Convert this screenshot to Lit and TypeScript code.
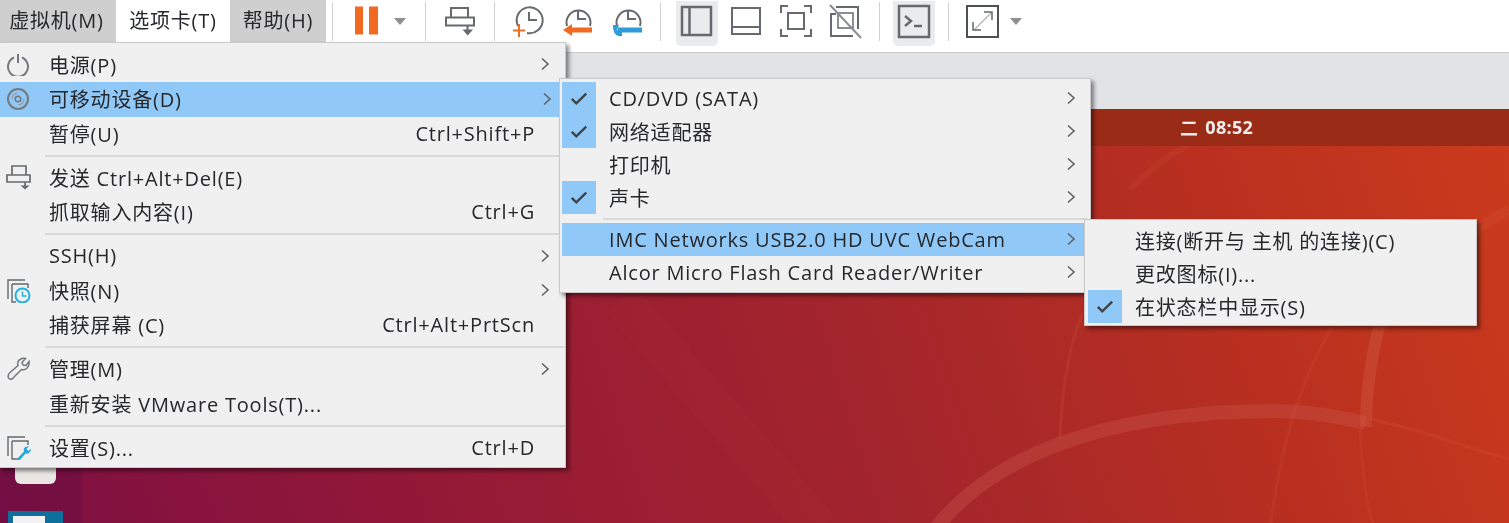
import { LitElement, html, svg, css } from "lit";
import { customElement } from "lit/decorators.js";

const G = "#666a6e";
const ico = (body: unknown, cls = "i36", vb = "0 0 36 36") =>
  html`<svg class=${cls} viewBox=${vb} fill="none" stroke=${G} stroke-width="2">${body}</svg>`;

const tb = {
  pause: html`<svg class="i36" viewBox="0 0 36 36"><rect x="7" y="2.500" width="8" height="28" fill="#f26a21"/><rect x="21" y="2.500" width="9" height="28" fill="#f26a21"/></svg>`,
  send: ico(svg`<path d="M9 4H26V13.500H9ZM4 13.500H32V21.500H4ZM25.500 21.500V27" /><path d="M20.500 25.500H31L25.700 31.500Z" fill=${G} stroke="none"/>`),
  c1: ico(svg`<path d="M8 22A13 13 0 1 1 17 29" /><path d="M19 8V16H27" /><path d="M9 20V33M3 26.500H15" stroke="#e8702a"/>`),
  c2: ico(svg`<path d="M7 22A12 12 0 1 1 30 22" /><path d="M18 7V15H26" /><path d="M10 26H32" stroke="#f26a21" stroke-width="5"/><path d="M3 26L12 20V32Z" fill="#f26a21" stroke="none"/>`),
  c3: ico(svg`<path d="M7 22A12 12 0 1 1 30 22" /><path d="M18 7V15H26" /><path d="M8 26H32" stroke="#2f9bd8" stroke-width="5"/><path d="M3 21C3 28 5 33 12 32L12 27L7 26L9 21Z" fill="#2f9bd8" stroke="none"/>`),
  v1: ico(svg`<rect x="3" y="3" width="29" height="28" stroke-width="2.500"/><path d="M10.500 3V31" stroke-width="2.500"/>`),
  v2: ico(svg`<rect x="4" y="4" width="28" height="26" /><path d="M4 23H32" />`),
  v3: ico(svg`<path d="M3 9V2H10M26 2H33V9M3 25V32H10M26 32H33V25" /><rect x="10" y="9" width="16" height="16" />`),
  v4: ico(svg`<path d="M9 3H31V25M26 32H4V10H9" /><rect x="11" y="9" width="15" height="15" stroke-width="1.500"/><path d="M3 1L34 34" stroke="#8a8d90" stroke-width="2"/>`),
  term: ico(svg`<rect x="3" y="2" width="30" height="31" stroke-width="2.500"/><path d="M9 12L15 17L9 22" stroke-width="2.500"/><path d="M18 22H26" stroke-width="2.500"/>`),
  full: ico(svg`<rect x="3" y="2" width="31" height="31" stroke="#4d5054"/><path d="M10 26L28 8" stroke="#b5b7ba" stroke-width="1.500"/><path d="M20 8H28V16M9 18V26H17" stroke="#666a6e" stroke-width="1.500"/>`),
};

const mi = {
  power: ico(svg`<path d="M8 5.500A10 10 0 1 0 16 5.500" stroke="#75797d"/><path d="M12 2V11" stroke="#75797d"/>`, "i24", "0 0 24 24"),
  disc: ico(svg`<circle cx="12" cy="12" r="10" stroke="#75797d"/><circle cx="12" cy="12" r="2.800" stroke-width="1.500" stroke="#75797d"/><path d="M6 12A6 6 0 0 1 12 6M12 18A6 6 0 0 0 18 12" stroke-width="1.200" stroke="#9a9da0"/>`, "i24", "0 0 24 24"),
  send: ico(svg`<path d="M7 2H21V11H7ZM2 11H25V18H2ZM20 18V23" stroke-width="1.700"/><path d="M15.500 21.500H24.500L20 25.500Z" fill=${G} stroke="none"/>`, "i26", "0 0 26 26"),
  snap: ico(svg`<path d="M20 3H3V22M7 7H23V11M7 7V25H11" stroke-width="1.400"/><circle cx="17.500" cy="18.500" r="7" stroke="#22b2e0" stroke-width="2"/><path d="M17.500 14.500V19H21.500" stroke="#22b2e0" stroke-width="1.500"/>`, "i26", "0 0 26 26"),
  wrench: ico(svg`<path d="M3 21.500C1 19 2 17.500 4 15.500L12 8.500C10.500 4.500 14 .5 19.500 1.500L16 5.500L17 8L20 8.500L23 4.500C24 9.500 19.500 14 15.500 12.500L7.500 20.500C6 22.500 4.500 23 3 21.500Z" stroke="#75797d" stroke-width="1.500"/>`, "i24", "0 0 24 24"),
  gear: ico(svg`<path d="M20 3H3V22M7 7H23V11M7 7V25H13" stroke-width="1.400"/><path d="M12 25L19 17.500C18 14 20 12 24 12.500L21.500 15L23.500 17L26 14.500C26 18 23.500 20.500 20.500 19.500L14.500 26.500Z" fill="#22a8dc" stroke="none"/>`, "i26", "0 0 26 26"),
};

const chev = html`<svg class="chev" viewBox="0 0 10 14" fill="none" stroke="#5f6266" stroke-width="1.600"><path d="M2 1.500L8 7L2 12.500"/></svg>`;
const check = html`<svg class="tick" viewBox="0 0 20 16" fill="none" stroke="#3f4347" stroke-width="2.600"><path d="M2 8.500L7 13.500L18 2.500"/></svg>`;

type M1 = { icon?: unknown; label?: string; sc?: string; sub?: boolean; on?: boolean; sep?: boolean };
const menu1: M1[] = [
  { icon: mi.power, label: "电源(P)", sub: true },
  { icon: mi.disc, label: "可移动设备(D)", sub: true, on: true },
  { label: "暂停(U)", sc: "Ctrl+Shift+P" },
  { sep: true },
  { icon: mi.send, label: "发送 Ctrl+Alt+Del(E)" },
  { label: "抓取输入内容(I)", sc: "Ctrl+G" },
  { sep: true },
  { label: "SSH(H)", sub: true },
  { icon: mi.snap, label: "快照(N)", sub: true },
  { label: "捕获屏幕 (C)", sc: "Ctrl+Alt+PrtScn" },
  { sep: true },
  { icon: mi.wrench, label: "管理(M)", sub: true },
  { label: "重新安装 VMware Tools(T)..." },
  { sep: true },
  { icon: mi.gear, label: "设置(S)...", sc: "Ctrl+D" },
];
type M2 = { label?: string; ck?: boolean; on?: boolean; sep?: boolean; sub?: boolean };
const menu2: M2[] = [
  { label: "CD/DVD (SATA)", ck: true, sub: true },
  { label: "网络适配器", ck: true, sub: true },
  { label: "打印机", sub: true },
  { label: "声卡", ck: true, sub: true },
  { sep: true },
  { label: "IMC Networks USB2.0 HD UVC WebCam", on: true, sub: true },
  { label: "Alcor Micro Flash Card Reader/Writer", sub: true },
];
const menu3: M2[] = [
  { label: "连接(断开与 主机 的连接)(C)" },
  { label: "更改图标(I)..." },
  { label: "在状态栏中显示(S)", ck: true },
];

@customElement("app-root")
export class AppRoot extends LitElement {
  static styles = css`
    :host { display: block; }
    .root { position: relative; width: 1509px; height: 523px; overflow: hidden; display: flex; flex-direction: column; font-family: "Open Sans", "Noto Sans CJK SC", sans-serif; font-size: 20px; letter-spacing: 0.8px; color: #26282b; background: #fff; filter: blur(0.35px); }
    svg { display: block; flex: none; }
    .toolbar { height: 52px; flex: none; display: flex; align-items: flex-start; background: #fff; }
    .tab { height: 42px; display: flex; align-items: center; justify-content: center; background: #cfcfcf; padding-bottom: 3px; box-sizing: border-box; }
    .tab.a { width: 116px; padding-right: 3px; }
    .tab.b { width: 114px; background: #fff; }
    .tab.c { width: 96px; }
    .group { height: 39px; margin-top: 2px; display: flex; align-items: center; border-left: 1px solid #d2d2d2; box-sizing: border-box; }
    .first { margin-left: 6px; width: 93px; padding-left: 8px; }
    .g-send { width: 69px; justify-content: center; }
    .g-clock { width: 166px; padding-left: 8px; }
    .g-view { width: 219px; padding-left: 11px; }
    .g-term { width: 69px; justify-content: center; }
    .g-full { padding-left: 8px; }
    .tool { width: 50px; height: 38px; display: flex; align-items: center; justify-content: center; position: relative; }
    .g-view .tool { width: 49.5px; }
    .g-term .tool { width: 42px; }
    .tool.act::before { content: ""; position: absolute; left: 50%; top: -2px; width: 42px; height: 45px; margin-left: -21px; background: #eaebed; border-radius: 0 0 5px 5px; }
    .tool > svg { position: relative; }
    .i36 { width: 36px; height: 36px; }
    .i24 { width: 24px; height: 24px; }
    .i26 { width: 26px; height: 26px; margin-left: -1px; }
    .drop { width: 18px; display: flex; justify-content: center; }
    .tri { width: 0; height: 0; border-left: 6.5px solid transparent; border-right: 6.5px solid transparent; border-top: 7px solid #8b8d90; }
    .strip { height: 57px; flex: none; background: #e2e3e5; border-top: 1px solid #c9c9c9; box-sizing: border-box; }
    .desk { flex: 1; position: relative; display: flex; flex-direction: column; background: linear-gradient(72deg, #7e0f42 0%, #961a36 30%, #a5262b 58%, #b9301f 80%, #cb3b1d 100%); }
    .wall { position: absolute; left: 0; top: 0; width: 1509px; height: 414px; }
    .panel { position: relative; height: 37px; flex: none; background: #9a2c17; display: flex; align-items: center; padding: 0 0 1px 1180px; color: #eee; font-weight: 700; font-size: 18px; letter-spacing: 0.3px; gap: 7px; box-sizing: border-box; }
    .launcher { position: relative; flex: 1; width: 82px; background: rgba(60,10,70,.18); }
    .app1 { position: absolute; left: 15px; top: 300px; width: 41px; height: 38px; background: #e9e6e3; border-radius: 0 0 6px 6px; }
    .app2 { position: absolute; left: 8px; top: 365px; width: 55px; height: 20px; background: #0f6f9c; }
    .app2::after { content: ""; position: absolute; left: 5px; top: 5px; width: 32px; height: 20px; background: #f2f2f2; }
    .menu { position: absolute; box-sizing: border-box; background: #f0f0f0; border: 1px solid #c9c9c9; box-shadow: 3px 3px 4px rgba(0,0,0,.45); }
    .m1 { left: -1px; top: 42px; width: 567px; height: 426px; padding-top: 4.5px; }
    .m2 { left: 559px; top: 78px; width: 532px; height: 215px; padding: 3px 3px 0 2px; }
    .m3 { left: 1084px; top: 219px; width: 393px; height: 107px; padding: 4px 3px 0 3px; }
    .row { display: flex; align-items: center; white-space: nowrap; box-sizing: border-box; }
    .m1 .row { height: 34.5px; padding: 0 0 1px 6px; }
    .m1 .row.on { background: #90c8f8; width: 560px; }
    .m1 .slot { width: 24px; flex: none; margin-right: 19px; }
    .m1 .lab { flex: 1; }
    .m1 .end { width: 30px; flex: none; padding-left: 5px; box-sizing: border-box; }
    .m1 .row.on .end { width: 23px; }
    .m1 .sep { height: 9.500px; display: flex; align-items: center; margin-left: 45px; }
    .sep::before { content: ""; flex: 1; height: 2px; background: #d9d9d9; }
    .m2 .row, .m3 .row { height: 33px; padding-bottom: 1px; }
    .m2 .row.on { background: #90c8f8; }
    .box { width: 34px; height: 33px; flex: none; display: flex; align-items: center; justify-content: center; margin: 0 13px 0 0; }
    .box.on { background: #90c8f8; }
    .m2 .lab, .m3 .lab { flex: 1; }
    .m2 .end { width: 21px; flex: none; }
    .m2 .sep { height: 9px; display: flex; align-items: center; margin-left: 41px; }
    .chev { width: 10px; height: 14px; }
    .tick { width: 18px; height: 15px; }
  `;

  private renderTwo(list: M2[]) {
    return list.map((r) =>
      r.sep
        ? html`<div class="sep"></div>`
        : html`<div class="row ${r.on ? "on" : ""}">
            <span class="box ${r.ck ? "on" : ""}">${r.ck ? check : ""}</span>
            <span class="lab">${r.label}</span>
            ${r.sub ? html`<span class="end">${chev}</span>` : ""}
          </div>`
    );
  }

  render() {
    return html`<div class="root">
      <div class="toolbar">
        <div class="tab a">虚拟机(M)</div>
        <div class="tab b">选项卡(T)</div>
        <div class="tab c">帮助(H)</div>
        <div class="group first"><div class="tool">${tb.pause}</div><div class="drop"><div class="tri"></div></div></div>
        <div class="group g-send"><div class="tool">${tb.send}</div></div>
        <div class="group g-clock"><div class="tool">${tb.c1}</div><div class="tool">${tb.c2}</div><div class="tool">${tb.c3}</div></div>
        <div class="group g-view"><div class="tool act">${tb.v1}</div><div class="tool">${tb.v2}</div><div class="tool">${tb.v3}</div><div class="tool">${tb.v4}</div></div>
        <div class="group g-term"><div class="tool act">${tb.term}</div></div>
        <div class="group g-full"><div class="tool">${tb.full}</div><div class="drop"><div class="tri"></div></div></div>
      </div>
      <div class="strip"></div>
      <div class="desk">
        <svg class="wall" viewBox="0 0 1509 414" fill="none">
          <path d="M935 420C990 350 1100 302 1274 302C1310 302 1340 308 1365 314" stroke="#c8544a" stroke-opacity=".38" stroke-width="14"/>
          <path d="M1366 318C1366 290 1370 250 1380 215" stroke="#d05a40" stroke-opacity=".4" stroke-width="12"/>
          <path d="M1370 310C1420 320 1470 340 1509 350" stroke="#d05a40" stroke-opacity=".22" stroke-width="3"/>
          <path d="M1060 330C1062 280 1068 240 1082 205" stroke="#d05a40" stroke-opacity=".22" stroke-width="3"/>
          <path d="M1270 420C1280 340 1300 260 1350 190" stroke="#d05a40" stroke-opacity=".18" stroke-width="3"/>
          <path d="M1360 320C1362 360 1366 400 1375 420" stroke="#d05a40" stroke-opacity=".18" stroke-width="3"/>
          <path d="M1380 215C1430 140 1480 120 1509 100" stroke="#d8603c" stroke-opacity=".2" stroke-width="10"/>
          <path d="M1130 80C1160 50 1180 40 1200 30" stroke="#d8603c" stroke-opacity=".15" stroke-width="6"/>
          <path d="M620 190L820 420" stroke="#c8544a" stroke-opacity=".05" stroke-width="40"/>
        </svg>
        <div class="panel"><span>二</span><span>08:52</span></div>
        <div class="launcher"><div class="app1"></div><div class="app2"></div></div>
      </div>

      <div class="menu m1">
        ${menu1.map((r) =>
          r.sep
            ? html`<div class="sep"></div>`
            : html`<div class="row ${r.on ? "on" : ""}">
                <span class="slot">${r.icon ?? ""}</span>
                <span class="lab">${r.label}</span>
                ${r.sc ? html`<span>${r.sc}</span>` : ""}
                <span class="end">${r.sub ? chev : ""}</span>
              </div>`
        )}
      </div>
      <div class="menu m2">${this.renderTwo(menu2)}</div>
      <div class="menu m3">${this.renderTwo(menu3)}</div>
    </div>`;
  }
}
